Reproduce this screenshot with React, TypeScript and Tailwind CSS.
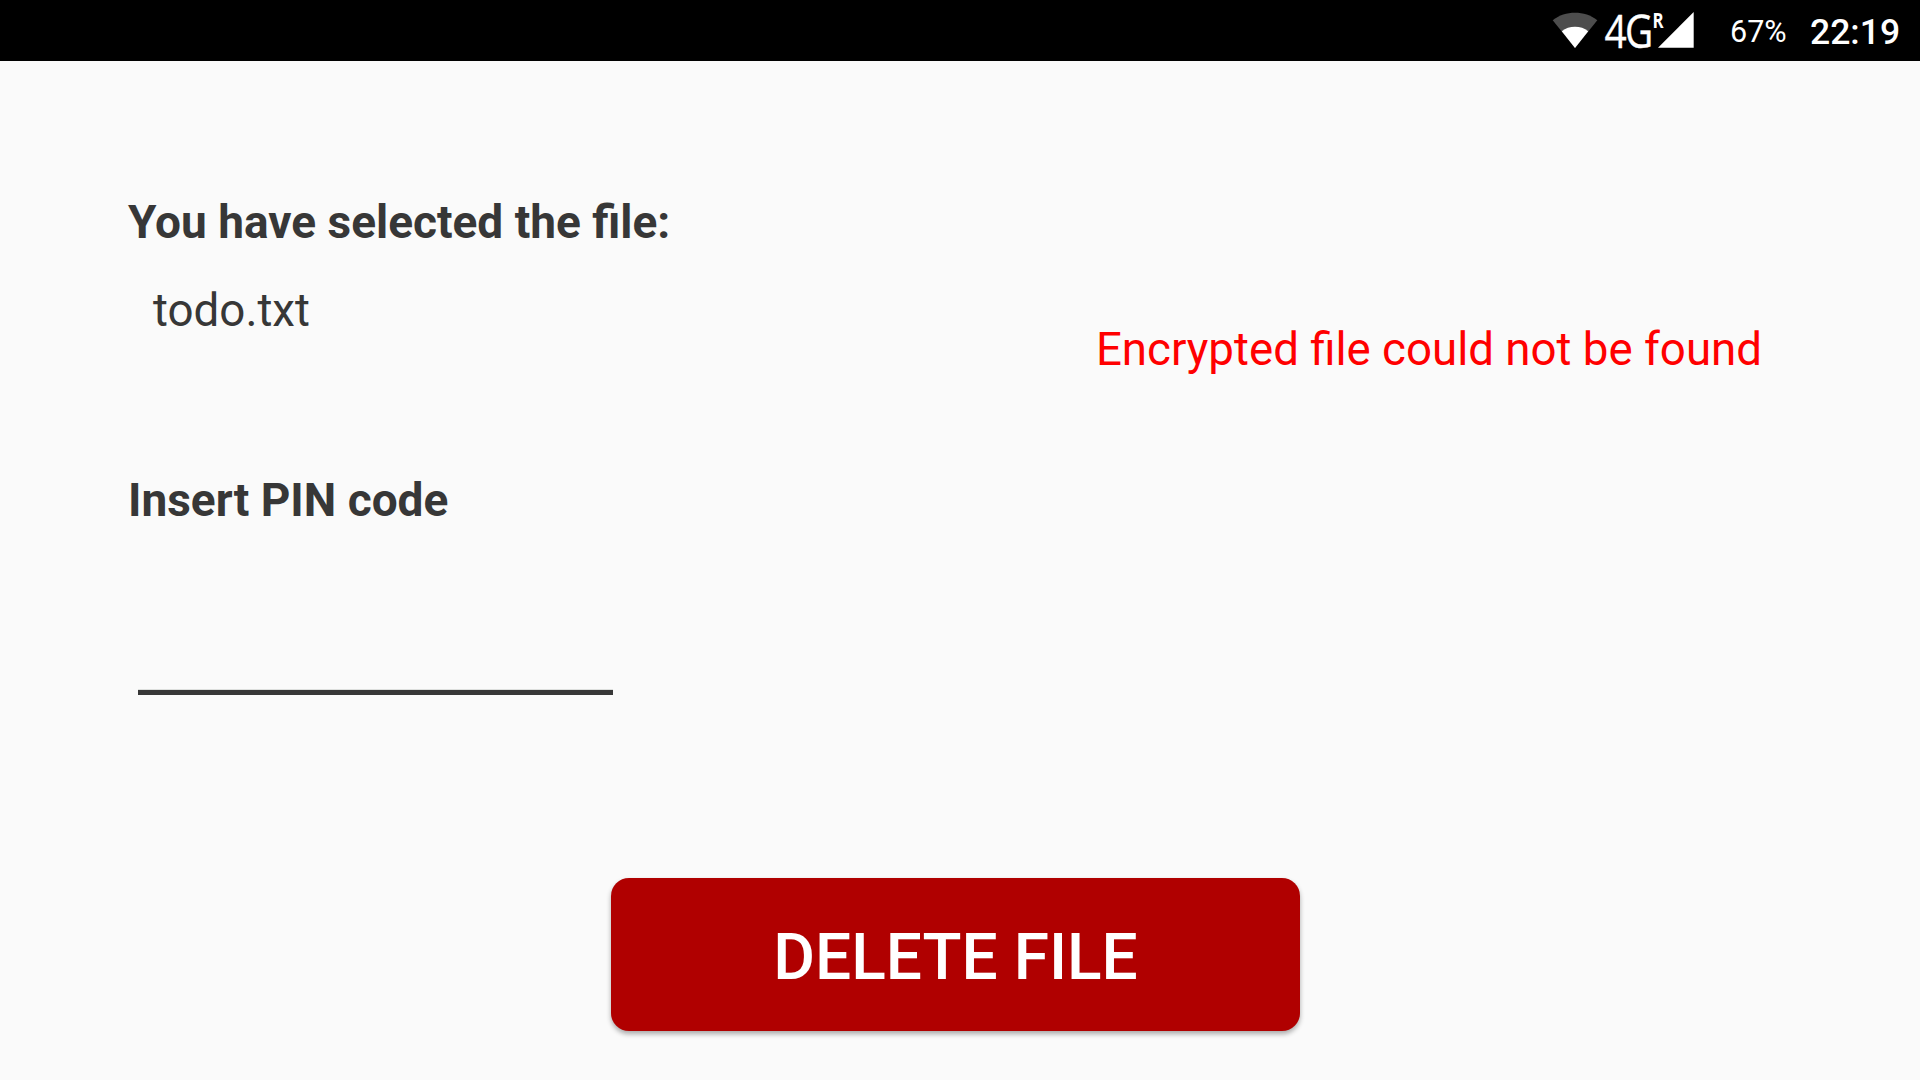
function WifiIcon() {
  return (
    <svg className="h-9 w-[46px] shrink-0" viewBox="0 0 46 36">
      <path d="M23 36 L0.7 8.2 C7 3.2 15 0.8 23 0.8 C31 0.8 39 3.2 45.3 8.2 Z" fill="#4d4d4d" />
      <path d="M23 36 L9.8 19.2 C13.5 16.3 18 14.8 23 14.8 C28 14.8 32.5 16.3 36.2 19.2 Z" fill="#fff" />
    </svg>
  );
}

function MobileSignal() {
  return (
    <svg className="h-[60px] w-[98px] shrink-0 overflow-visible" viewBox="1598 0 98 60" fill="#fff">
      <g fontFamily='"Open Sans", "Noto Sans", sans-serif'>
        <text
          transform="translate(1604.4 48) scale(0.835 1)"
          fontSize="46.5"
          letterSpacing="-2"
          stroke="#fff"
          strokeWidth="0.4"
        >
          4G
        </text>
        <text transform="translate(1652.6 27.6) scale(0.82 1)" fontSize="20.5" fontWeight="700">
          R
        </text>
      </g>
      <path d="M1658 47.7 L1693.7 12 V47.7 Z" />
    </svg>
  );
}

export default function App() {
  return (
    <div className="flex h-[1080px] w-[1920px] flex-col overflow-hidden bg-[#fafafa] font-['Roboto',sans-serif] text-[#373737]">
      <header className="flex h-[61px] shrink-0 items-start bg-black pl-[1552px] text-white">
        <div className="pt-3">
          <WifiIcon />
        </div>
        <MobileSignal />
        <span className="ml-[34px] mt-[14px] w-[55px] text-[30.5px] leading-9">67%</span>
        <span className="ml-[25px] mt-[14px] text-[35.5px] leading-9 font-medium">22:19</span>
      </header>

      <main className="flex flex-1 flex-col px-32">
        <section className="flex h-[404px] justify-between pt-[134px]">
          <div>
            <h1 className="text-[46px] leading-[54px] font-bold">You have selected the file:</h1>
            <p className="mt-[35px] pl-[25px] text-[45.7px] leading-[54px]">todo.txt</p>
          </div>
          <p className="mr-[30px] mt-[128px] text-[45.65px] leading-[54px] whitespace-nowrap text-[#ff0000]">
            Encrypted file could not be found
          </p>
        </section>

        <section className="h-[413px]">
          <label htmlFor="pin" className="mt-2 block text-[46px] leading-[54px] font-bold">
            Insert PIN code
          </label>
          <input
            id="pin"
            type="password"
            className="mt-[80px] ml-[10px] block h-[88px] w-[475px] border-b-5 border-[#373737] bg-transparent text-[46px] shadow-[inset_0_-1px_0_#dddfdd] outline-none"
          />
        </section>

        <button
          type="button"
          className="ml-[483px] h-[153px] w-[689px] rounded-[18px] bg-[#b00000] pt-1.5 text-[64px] leading-[76px] font-medium text-white shadow-[0_3px_5px_rgba(0,0,0,0.32)]"
        >
          DELETE FILE
        </button>
      </main>
    </div>
  );
}
